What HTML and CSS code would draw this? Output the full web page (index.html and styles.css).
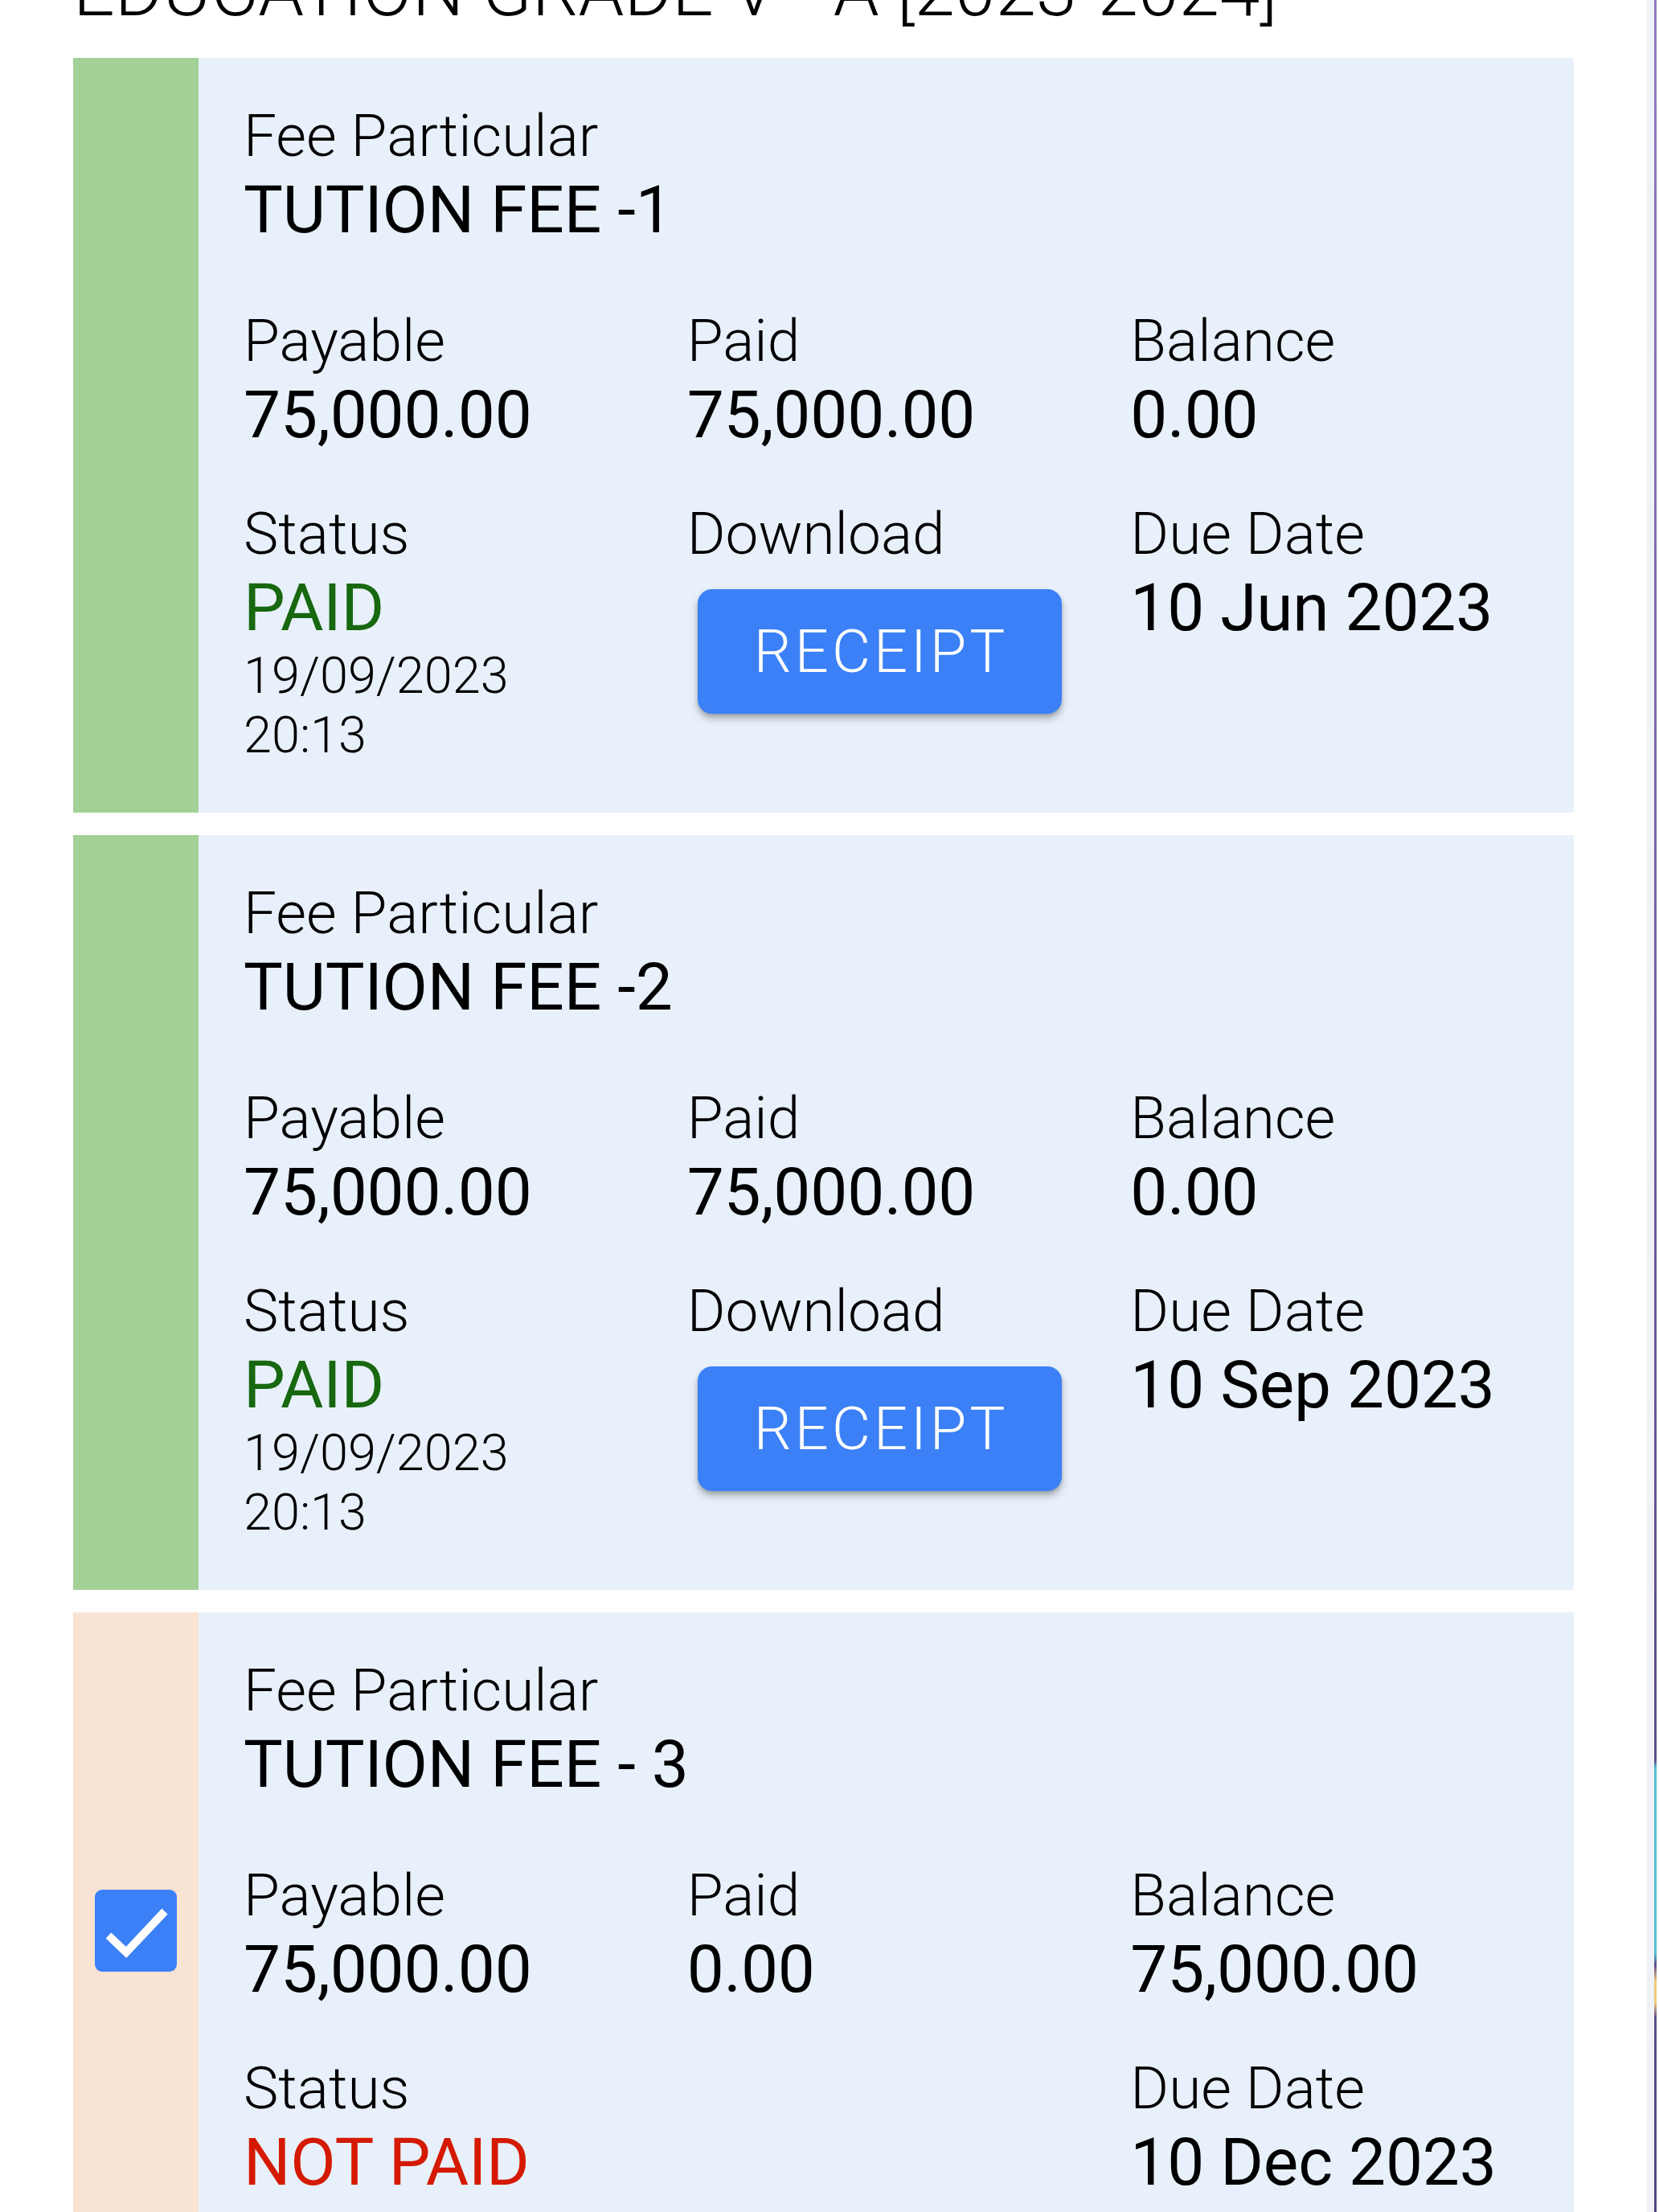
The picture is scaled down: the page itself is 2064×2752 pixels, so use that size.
FILE: index.html
```html
<!DOCTYPE html>
<html lang="en">
<head>
<meta charset="utf-8">
<title>Fee Details</title>
<link rel="stylesheet" href="styles.css">
</head>
<body>
<div class="screen">
  <main class="page">
    <h1 class="class-title">EDUCATION GRADE V - A [2023-2024]</h1>
    <section class="fee-list">
      <article class="fee-card paid">
        <div class="fee-side"></div>
        <div class="fee-body">
          <div class="head">
            <div class="label">Fee Particular</div>
            <div class="value">TUTION FEE -1</div>
          </div>
          <div class="grid">
            <div class="field"><div class="label">Payable</div><div class="value">75,000.00</div></div>
            <div class="field"><div class="label">Paid</div><div class="value">75,000.00</div></div>
            <div class="field"><div class="label">Balance</div><div class="value">0.00</div></div>
            <div class="field"><div class="label">Status</div><div class="value st-paid">PAID</div><div class="stamp">19/09/2023<br>20:13</div></div>
            <div class="field"><div class="label">Download</div><button class="receipt">RECEIPT</button></div>
            <div class="field"><div class="label">Due Date</div><div class="value">10 Jun 2023</div></div>
          </div>
        </div>
      </article>
      <article class="fee-card paid">
        <div class="fee-side"></div>
        <div class="fee-body">
          <div class="head">
            <div class="label">Fee Particular</div>
            <div class="value">TUTION FEE -2</div>
          </div>
          <div class="grid">
            <div class="field"><div class="label">Payable</div><div class="value">75,000.00</div></div>
            <div class="field"><div class="label">Paid</div><div class="value">75,000.00</div></div>
            <div class="field"><div class="label">Balance</div><div class="value">0.00</div></div>
            <div class="field"><div class="label">Status</div><div class="value st-paid">PAID</div><div class="stamp">19/09/2023<br>20:13</div></div>
            <div class="field"><div class="label">Download</div><button class="receipt">RECEIPT</button></div>
            <div class="field"><div class="label">Due Date</div><div class="value">10 Sep 2023</div></div>
          </div>
        </div>
      </article>
      <article class="fee-card due">
        <div class="fee-side">
          <span class="check" role="checkbox" aria-checked="true">
            <svg viewBox="0 0 102 102" width="102" height="102"><polyline points="17,57 39,78 87,27" fill="none" stroke="#fff" stroke-width="10"/></svg>
          </span>
        </div>
        <div class="fee-body">
          <div class="head">
            <div class="label">Fee Particular</div>
            <div class="value">TUTION FEE - 3</div>
          </div>
          <div class="grid">
            <div class="field"><div class="label">Payable</div><div class="value">75,000.00</div></div>
            <div class="field"><div class="label">Paid</div><div class="value">0.00</div></div>
            <div class="field"><div class="label">Balance</div><div class="value">75,000.00</div></div>
            <div class="field"><div class="label">Status</div><div class="value st-due">NOT PAID</div></div>
            <div class="field"></div>
            <div class="field"><div class="label">Due Date</div><div class="value">10 Dec 2023</div></div>
          </div>
        </div>
      </article>
    </section>
  </main>
  <div class="rail"></div>
  <div class="edge"></div>
</div>
</body>
</html>
```
FILE: styles.css
```css
* { box-sizing: border-box; margin: 0; padding: 0; }
html, body { background: #fff; }
body {
  font-family: Roboto, "Noto Sans", sans-serif;
  color: #000;
  height: 2752px;
  overflow: hidden;
}
.screen { display: flex; height: 2752px; overflow: hidden; }
.page { width: 2049px; flex: none; padding: 0 91px; }
.class-title {
  font-weight: 300;
  font-size: 91px;
  line-height: 91px;
  margin-top: -57px;
  margin-bottom: 38px;
  white-space: nowrap;
}
.fee-list { display: flex; flex-direction: column; gap: 28px; }
.fee-card { display: flex; }
.fee-side {
  width: 156px;
  flex: none;
  display: flex;
  align-items: center;
  justify-content: center;
}
.paid .fee-side { background: #a2d196; }
.due .fee-side { background: #f9e3d2; }
.fee-body {
  flex: 1;
  background: #e8f1fb;
  padding: 54px 0 59px 56px;
}
.label { font-weight: 300; font-size: 73px; line-height: 87px; }
.value { font-weight: 400; font-size: 82px; line-height: 96px; white-space: nowrap; letter-spacing: -0.2px; }
.head { margin-bottom: 72px; }
.grid { display: grid; grid-template-columns: repeat(3, 1fr); row-gap: 57px; }
.stamp { font-weight: 300; font-size: 63px; line-height: 74px; }
.st-paid { color: #17680f; }
.st-due { color: #d41a00; }
.receipt {
  display: block;
  width: 453px;
  height: 155px;
  margin: 25px 0 0 13px;
  padding-left: 4px;
  border: none;
  border-radius: 18px;
  background: #3b80f7;
  color: #fff;
  font-family: Roboto, "Noto Sans", sans-serif;
  font-weight: 300;
  font-size: 74px;
  letter-spacing: 4px;
  box-shadow: 0 6px 10px rgba(0, 0, 0, 0.28), 0 2px 4px rgba(0, 0, 0, 0.12);
}
.check {
  display: block;
  width: 102px;
  height: 102px;
  border-radius: 9px;
  background: #3b80f7;
}
.check svg { display: block; }
.rail { width: 9px; flex: none; background: #f1f2f7; }
.edge {
  width: 6px;
  flex: none;
  border-right: 3px solid #fff;
  background: linear-gradient(to bottom,
    #9478c4 0px, #6e5aa0 1500px, #5c4d8c 2190px,
    #57bfd0 2200px, #57bfd0 2430px, #5c4d8c 2445px,
    #f2c97a 2465px, #f2c97a 2492px, #5c4d8c 2510px,
    #4e4480 2752px);
}
```
